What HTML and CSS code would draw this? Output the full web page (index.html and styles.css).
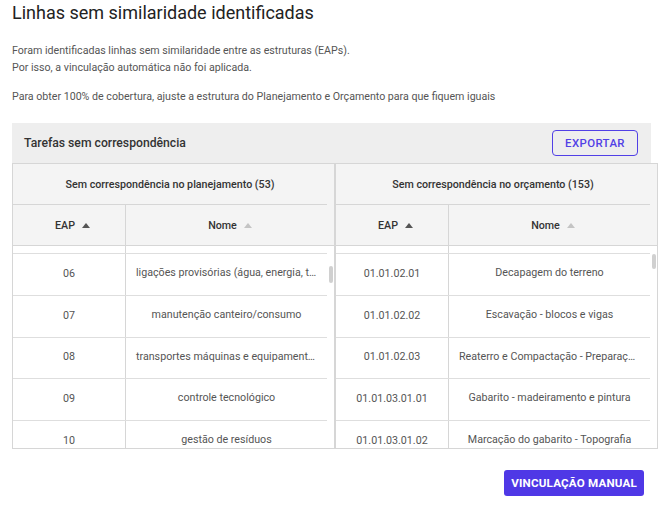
FILE: index.html
```html
<!DOCTYPE html>
<html lang="pt-BR">
<head>
<meta charset="utf-8">
<title>Linhas sem similaridade identificadas</title>
<link rel="stylesheet" href="styles.css">
</head>
<body>
<div class="page">
  <h1 class="title">Linhas sem similaridade identificadas</h1>
  <p class="desc">Foram identificadas linhas sem similaridade entre as estruturas (EAPs).<br>Por isso, a vinculação automática não foi aplicada.</p>
  <p class="desc">Para obter 100% de cobertura, ajuste a estrutura do Planejamento e Orçamento para que fiquem iguais</p>

  <section class="panel">
    <div class="panel-head">
      <span class="panel-title">Tarefas sem correspondência</span>
      <button class="btn-outline">EXPORTAR</button>
    </div>
    <div class="tables">
      <div class="half">
        <div class="head">
          <div class="group">Sem correspondência no planejamento (53)</div>
          <div class="cols">
            <div class="col eap">EAP <span class="sort active"></span></div>
            <div class="col nome">Nome <span class="sort"></span></div>
          </div>
        </div>
        <div class="body">
          <div class="rows">
            <div class="row stub"><div class="cell eap"></div><div class="cell nome"></div></div>
            <div class="row"><div class="cell eap">06</div><div class="cell nome">ligações provisórias (água, energia, telefone)</div></div>
            <div class="row"><div class="cell eap">07</div><div class="cell nome">manutenção canteiro/consumo</div></div>
            <div class="row"><div class="cell eap">08</div><div class="cell nome">transportes máquinas e equipamentos</div></div>
            <div class="row"><div class="cell eap">09</div><div class="cell nome">controle tecnológico</div></div>
            <div class="row"><div class="cell eap">10</div><div class="cell nome">gestão de resíduos</div></div>
          </div>
          <div class="track"><div class="thumb thumb-left"></div></div>
        </div>
      </div>
      <div class="half second">
        <div class="head">
          <div class="group">Sem correspondência no orçamento (153)</div>
          <div class="cols">
            <div class="col eap">EAP <span class="sort active"></span></div>
            <div class="col nome">Nome <span class="sort"></span></div>
          </div>
        </div>
        <div class="body">
          <div class="rows">
            <div class="row stub"><div class="cell eap"></div><div class="cell nome"></div></div>
            <div class="row"><div class="cell eap">01.01.02.01</div><div class="cell nome">Decapagem do terreno</div></div>
            <div class="row"><div class="cell eap">01.01.02.02</div><div class="cell nome">Escavação - blocos e vigas</div></div>
            <div class="row"><div class="cell eap">01.01.02.03</div><div class="cell nome">Reaterro e Compactação - Preparação do solo</div></div>
            <div class="row"><div class="cell eap">01.01.03.01.01</div><div class="cell nome">Gabarito - madeiramento e pintura</div></div>
            <div class="row"><div class="cell eap">01.01.03.01.02</div><div class="cell nome">Marcação do gabarito - Topografia</div></div>
          </div>
          <div class="track"><div class="thumb thumb-right"></div></div>
        </div>
      </div>
    </div>
  </section>

  <div class="actions">
    <button class="btn-primary">VINCULAÇÃO MANUAL</button>
  </div>
</div>
</body>
</html>
```

FILE: styles.css
```css
* { box-sizing: border-box; }

html, body {
  margin: 0;
  padding: 0;
  background: #ffffff;
}

body {
  font-family: Roboto, "Liberation Sans", Arial, sans-serif;
  color: #555555;
}

.page {
  padding: 0 0 0 12px;
  width: 664px;
}

.title {
  margin: 0;
  font-size: 18px;
  line-height: 25px;
  font-weight: 400;
  color: #222222;
}

.desc {
  margin: 17px 0 0 0;
  font-size: 10.65px;
  line-height: 17px;
  color: #555555;
}

.desc + .desc {
  margin-top: 12px;
}

.panel {
  margin-top: 18px;
}

.panel-head {
  width: 639px;
  height: 40px;
  background: #eeeeee;
  display: flex;
  align-items: center;
  justify-content: space-between;
  padding: 0 13px 0 12px;
}

.panel-title {
  font-size: 12.2px;
  font-weight: 500;
  color: #333333;
}

.btn-outline {
  width: 86px;
  height: 26px;
  border: 1px solid #5140e6;
  border-radius: 4px;
  background: transparent;
  color: #5140e6;
  font-family: Roboto, "Liberation Sans", Arial, sans-serif;
  font-size: 11.4px;
  font-weight: 500;
  letter-spacing: 0.4px;
  padding: 0;
}

.tables {
  width: 646px;
  border: 1px solid #d6d6d6;
  display: grid;
  grid-template-columns: 321px 323px;
}

.half.second {
  border-left: 2px solid #d6d6d6;
}

.head {
  background: #f4f4f4;
  border-bottom: 1px solid #d6d6d6;
}

.group {
  height: 41px;
  margin-right: 7px;
  border-bottom: 1px solid #d6d6d6;
  display: flex;
  align-items: center;
  justify-content: center;
  font-size: 10.7px;
  font-weight: 500;
  color: #333333;
}

.cols {
  height: 40px;
  margin-right: 7px;
  display: flex;
}

.col {
  display: flex;
  align-items: center;
  justify-content: center;
  gap: 7px;
  padding-left: 7px;
  font-size: 10.7px;
  font-weight: 500;
  color: #333333;
}

.eap {
  width: 113px;
  flex: none;
  border-right: 1px solid #d6d6d6;
}

.nome {
  flex: 1;
  min-width: 0;
}

.sort {
  width: 0;
  height: 0;
  border-left: 4px solid transparent;
  border-right: 4px solid transparent;
  border-bottom: 5px solid #c4c4c4;
}

.sort.active {
  border-bottom-color: #555555;
}

.body {
  height: 202px;
  display: flex;
  background: #ffffff;
}

.rows {
  flex: 1;
  min-width: 0;
  overflow: hidden;
}

.row {
  height: 41.75px;
  display: flex;
  border-bottom: 1px solid #dedede;
}

.row.stub {
  height: 8px;
}

.cell {
  display: flex;
  align-items: center;
  justify-content: center;
  padding-bottom: 2px;
  font-size: 10.7px;
  color: #555555;
  white-space: nowrap;
}

.cell.nome {
  display: block;
  line-height: 38px;
  text-align: center;
  overflow: hidden;
  text-overflow: ellipsis;
  padding: 0 10px;
}

.track {
  width: 7px;
  flex: none;
  padding-left: 2px;
}

.thumb {
  width: 4px;
  background: #d0d0d0;
  border-radius: 2px;
}

.thumb-left {
  margin-top: 20px;
  height: 17px;
}

.thumb-right {
  margin-top: 8px;
  height: 15px;
}

.actions {
  width: 632px;
  display: flex;
  justify-content: flex-end;
  margin-top: 21px;
}

.btn-primary {
  height: 26px;
  padding: 0 7px;
  border: none;
  border-radius: 3px;
  background: #4f38e6;
  color: #ffffff;
  font-family: Roboto, "Liberation Sans", Arial, sans-serif;
  font-size: 11.6px;
  font-weight: 700;
  letter-spacing: 0.2px;
}
```
